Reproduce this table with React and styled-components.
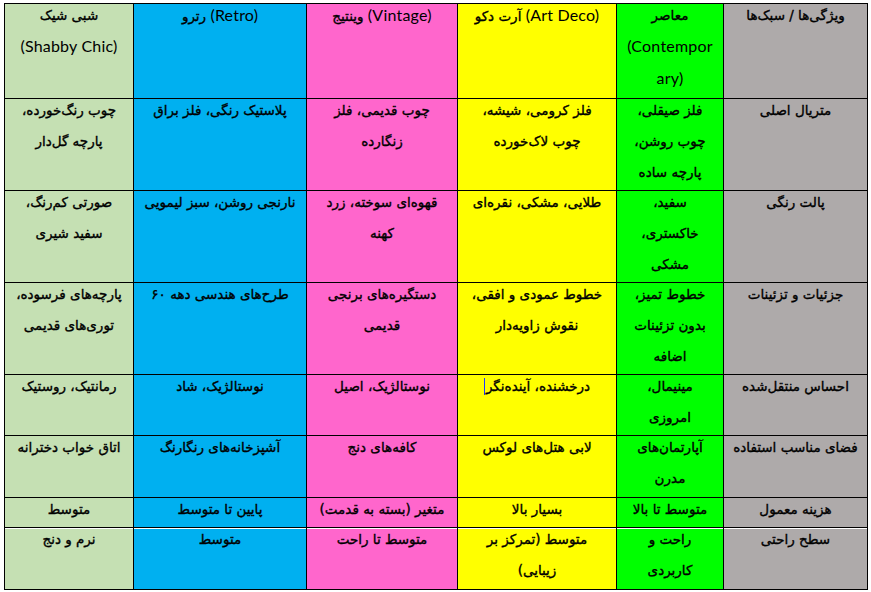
import styled, { createGlobalStyle } from "styled-components";

const GlobalStyle = createGlobalStyle`
  html, body {
    margin: 0;
    padding: 0;
    background: #ffffff;
  }
  body {
    font-family: Lato, "DejaVu Sans", sans-serif;
  }
`;

//
// styles
//

const Page = styled.div`
  padding: 3px 0 0 4px;
`;

const Grid = styled.div`
  display: grid;
  grid-template-columns: 143px 106px 158px 150px 172px 128px;
  gap: 1px;
  padding: 1px;
  width: max-content;
  background: #000000;
`;

const Cell = styled.div`
  box-sizing: border-box;
  height: ${(p) => p.$h}px;
  background: ${(p) => p.$bg};
  border-top: ${(p) => (p.$split ? "1px solid #ffffff" : "none")};
  padding: 0 2px;
  overflow: hidden;
  text-align: center;
  color: #000000;
`;

const Lines = styled.div`
  margin-top: ${(p) => (p.$split ? -5 : -4)}px;
`;

const Line = styled.div`
  font-family: "DejaVu Sans", sans-serif;
  font-size: 13.5px;
  -webkit-text-stroke: 0.35px #000000;
  line-height: 30.8px;
  white-space: nowrap;

  bdi {
    font-family: Lato, sans-serif;
    -webkit-text-stroke: 0;
    font-size: 16px;
    letter-spacing: 0.2px;
  }
`;

const Caret = styled.span`
  display: inline-block;
  width: 1px;
  height: 17px;
  margin-right: 1px;
  vertical-align: -4px;
  background: #1f3cff;
`;

// columns from right to left
const columns = [
  { bg: "#aeaaaa" },
  { bg: "#00ff00" },
  { bg: "#ffff00" },
  { bg: "#ff66cc" },
  { bg: "#00b0f0" },
  { bg: "#c5e0b3" },
];

const Latin = ({ children }) => <bdi dir="ltr">{children}</bdi>;

const rows = [
  {
    height: 94,
    cells: [
      ["ویژگی‌ها / سبک‌ها"],
      ["معاصر", <Latin>(Contempor</Latin>, <Latin>ary)</Latin>],
      [<><Latin>(Art Deco)</Latin> آرت دکو</>],
      [<><Latin>(Vintage)</Latin> وینتیج</>],
      [<><Latin>(Retro)</Latin> رترو</>],
      ["شبی شیک", <Latin>(Shabby Chic)</Latin>],
    ],
  },
  {
    height: 91,
    cells: [
      ["متریال اصلی"],
      ["فلز صیقلی،", "چوب روشن،", "پارچه ساده"],
      ["فلز کرومی، شیشه،", "چوب لاک‌خورده"],
      ["چوب قدیمی، فلز", "زنگارده"],
      ["پلاستیک رنگی، فلز براق"],
      ["چوب رنگ‌خورده،", "پارچه گل‌دار"],
    ],
  },
  {
    height: 91,
    cells: [
      ["پالت رنگی"],
      ["سفید،", "خاکستری،", "مشکی"],
      ["طلایی، مشکی، نقره‌ای"],
      ["قهوه‌ای سوخته، زرد", "کهنه"],
      ["نارنجی روشن، سبز لیمویی"],
      ["صورتی کم‌رنگ،", "سفید شیری"],
    ],
  },
  {
    height: 91,
    cells: [
      ["جزئیات و تزئینات"],
      ["خطوط تمیز،", "بدون تزئینات", "اضافه"],
      ["خطوط عمودی و افقی،", "نقوش زاویه‌دار"],
      ["دستگیره‌های برنجی", "قدیمی"],
      ["طرح‌های هندسی دهه ۶۰"],
      ["پارچه‌های فرسوده،", "توری‌های قدیمی"],
    ],
  },
  {
    height: 60,
    cells: [
      ["احساس منتقل‌شده"],
      ["مینیمال،", "امروزی"],
      [<>درخشنده، آینده‌نگر<Caret /></>],
      ["نوستالژیک، اصیل"],
      ["نوستالژیک، شاد"],
      ["رمانتیک، روستیک"],
    ],
  },
  {
    height: 61,
    cells: [
      ["فضای مناسب استفاده"],
      ["آپارتمان‌های", "مدرن"],
      ["لابی هتل‌های لوکس"],
      ["کافه‌های دنج"],
      ["آشپزخانه‌های رنگارنگ"],
      ["اتاق خواب دخترانه"],
    ],
  },
  {
    height: 29,
    cells: [
      ["هزینه معمول"],
      ["متوسط تا بالا"],
      ["بسیار بالا"],
      ["متغیر (بسته به قدمت)"],
      ["پایین تا متوسط"],
      ["متوسط"],
    ],
  },
  {
    height: 61,
    split: true,
    cells: [
      ["سطح راحتی"],
      ["راحت و", "کاربردی"],
      ["متوسط (تمرکز بر", "زیبایی)"],
      ["متوسط تا راحت"],
      ["متوسط"],
      ["نرم و دنج"],
    ],
  },
];

export default function App() {
  return (
    <>
      <GlobalStyle />
      <Page>
        <Grid dir="rtl">
          {rows.map((row, r) =>
            row.cells.map((lines, c) => (
              <Cell
                key={`${r}-${c}`}
                $bg={columns[c].bg}
                $h={row.height}
                $split={row.split}
              >
                <Lines $split={row.split}>
                  {lines.map((line, i) => (
                    <Line key={i}>{line}</Line>
                  ))}
                </Lines>
              </Cell>
            ))
          )}
        </Grid>
      </Page>
    </>
  );
}
